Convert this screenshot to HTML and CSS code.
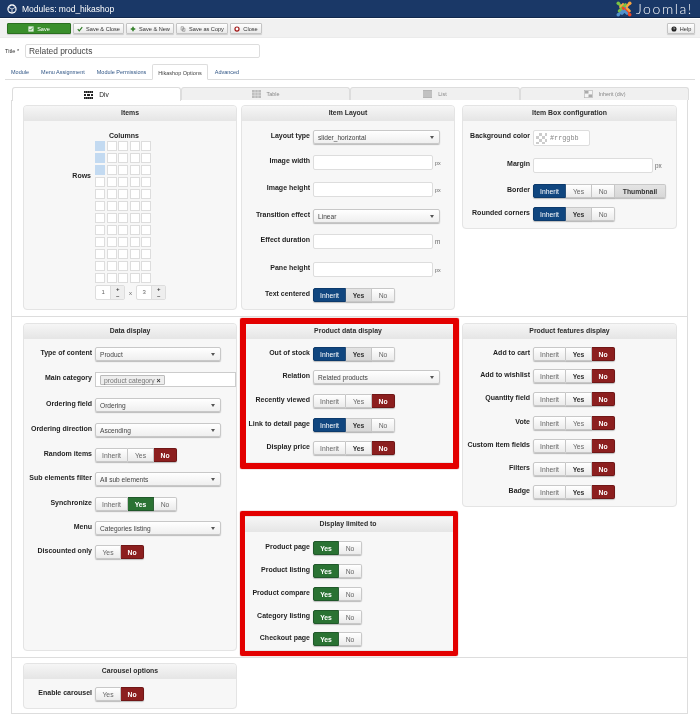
FILE: index.html
```html
<!DOCTYPE html>
<html lang="en">
<head>
<meta charset="utf-8">
<title>Modules: mod_hikashop</title>
<link rel="stylesheet" href="styles.css">
</head>
<body>
<div class="page">
<header class="topbar">
  <svg class="cube" viewBox="0 0 12 12"><circle cx="6" cy="6" r="5.6" fill="#fff"/><path d="M6 1.8 9.8 3.7 6 5.6 2.2 3.7Z" fill="#1a3867"/><path d="M2 4.6 5.5 6.4V10.2L2 8.4ZM10 4.6 6.5 6.4V10.2L10 8.4Z" fill="#1a3867"/></svg>
  <div class="app-title">Modules: mod_hikashop</div>
  <div class="brand">
    <svg class="jlogo" viewBox="0 0 16 16" fill="none" stroke-width="2.6" stroke-linecap="round">
      <path d="M2.5 2.5 8 8 5.5 10.5" stroke="#7ac143"/>
      <path d="M13.5 2.5 8 8" stroke="#f9a541"/>
      <path d="M4.5 6 7 3.5 13.5 10" stroke="#f9a541"/>
      <path d="M2.5 13.5 9 7" stroke="#5091cd"/>
      <path d="M3 10 9.5 3.5" stroke="#7ac143"/>
      <path d="M13.5 13.5 7 7" stroke="#f44321"/>
      <path d="M6 12.5 8.5 10 11 12.5" stroke="#5091cd"/>
      <circle cx="2.2" cy="2.2" r="1.7" fill="#7ac143"/><circle cx="13.8" cy="2.2" r="1.7" fill="#f9a541"/><circle cx="2.2" cy="13.8" r="1.7" fill="#5091cd"/><circle cx="13.8" cy="13.8" r="1.7" fill="#f44321"/>
    </svg>
    <span class="jname">Joomla!</span>
  </div>
</header>
<nav class="toolbar">
  <button class="btn save"><svg class="ic" viewBox="0 0 8 8"><rect x=".5" y=".5" width="7" height="7" fill="#dfeedd"/><path d="M2 4 3.5 5.5 6.5 2" stroke="#2f8a25" fill="none"/></svg>Save</button>
  <button class="btn w51"><svg class="ic" viewBox="0 0 8 8"><path d="M1 4.2 3 6.4 7 1.6" stroke="#2f7d25" stroke-width="1.6" fill="none"/></svg>Save &amp; Close</button>
  <button class="btn w48"><svg class="ic" viewBox="0 0 8 8"><path d="M4 1V7M1 4H7" stroke="#2f7d25" stroke-width="2" fill="none"/></svg>Save &amp; New</button>
  <button class="btn w52"><svg class="ic" viewBox="0 0 8 8"><path d="M1.5 1H4.5V5.5H1.5ZM3.5 3H6.5V7H3.5Z" stroke="#777" stroke-width=".8" fill="#fff"/></svg>Save as Copy</button>
  <button class="btn w32"><svg class="ic" viewBox="0 0 8 8"><circle cx="4" cy="4" r="2.7" stroke="#a01515" stroke-width="1.6" fill="#fff"/></svg>Close</button>
  <button class="btn help"><svg class="ic" viewBox="0 0 8 8"><circle cx="4" cy="4" r="3.4" fill="#222"/><path d="M3 3.2C3 2 5 2 5 3.2 5 4 4 4 4 4.8" stroke="#fff" stroke-width=".8" fill="none"/></svg>Help</button>
</nav>
<div class="title-row">
  <label class="title-label">Title *</label>
  <div class="title-input">Related products</div>
</div>
<ul class="tabs">
  <li>Module</li><li>Menu Assignment</li><li>Module Permissions</li><li class="active">Hikashop Options</li><li>Advanced</li>
</ul>
<ul class="subtabs">
  <li class="on"><svg class="st-ic" viewBox="0 0 9 8"><path d="M0 0H9V2H0ZM0 3H2V5H0ZM3 3H6V5H3ZM7 3H9V5H7ZM0 6H9V8H0Z" fill="#222"/><path d="M1 1H8M1 7H8" stroke="#ddd" stroke-width=".6" stroke-dasharray="1 1"/></svg>Div</li>
  <li><svg class="st-ic" viewBox="0 0 9 8"><rect width="9" height="8" fill="#bbb"/><path d="M3 0V8M6 0V8M0 2.7H9M0 5.3H9" stroke="#e8e8e8" stroke-width=".6"/></svg>Table</li>
  <li><svg class="st-ic" viewBox="0 0 9 8"><rect width="9" height="8" fill="#b5b5b5"/><path d="M0 2H9M0 4H9M0 6H9" stroke="#ddd" stroke-width=".6"/></svg>List</li>
  <li><svg class="st-ic" viewBox="0 0 10 9"><rect x=".3" y=".3" width="9.4" height="8.4" fill="#f4f4f4" stroke="#aaa" stroke-width=".6"/><rect x="1" y="1" width="4" height="3" fill="#aaa"/><rect x="5" y="5" width="4" height="3" fill="#aaa"/></svg>Inherit (div)</li>
</ul>
<main class="panel">
  <section class="row row-1">
    <fieldset class="box">
      <h2>Items</h2>
      <div class="items">
        <div class="cols-label">Columns</div>
        <div class="rows-wrap">
          <div class="rows-label">Rows</div>
          <div class="cells">
            <i class="sel"></i><i></i><i></i><i></i><i></i>
            <i class="sel"></i><i></i><i></i><i></i><i></i>
            <i class="sel"></i><i></i><i></i><i></i><i></i>
            <i></i><i></i><i></i><i></i><i></i>
            <i></i><i></i><i></i><i></i><i></i>
            <i></i><i></i><i></i><i></i><i></i>
            <i></i><i></i><i></i><i></i><i></i>
            <i></i><i></i><i></i><i></i><i></i>
            <i></i><i></i><i></i><i></i><i></i>
            <i></i><i></i><i></i><i></i><i></i>
            <i></i><i></i><i></i><i></i><i></i>
            <i></i><i></i><i></i><i></i><i></i>
          </div>
        </div>
        <div class="steppers">
          <div class="stepper"><span class="num">1</span><span class="pm"><b>+</b><b>–</b></span></div>
          <span class="times">x</span>
          <div class="stepper"><span class="num">3</span><span class="pm"><b>+</b><b>–</b></span></div>
        </div>
      </div>
    </fieldset>
    <fieldset class="box">
      <h2>Item Layout</h2>
      <div class="form f-layout">
        <label>Layout type</label><div class="select s127">slider_horizontal</div>
        <label>Image width</label><div class="ctl"><div class="input"></div><span class="unit tight">px</span></div>
        <label>Image height</label><div class="ctl"><div class="input"></div><span class="unit tight">px</span></div>
        <label>Transition effect</label><div class="select s127">Linear</div>
        <label>Effect duration</label><div class="ctl"><div class="input"></div><span class="unit">m</span></div>
        <label>Pane height</label><div class="ctl"><div class="input"></div><span class="unit tight">px</span></div>
        <label>Text centered</label><div class="tg"><span class="blue">Inherit</span><span class="dim">Yes</span><span>No</span></div>
      </div>
    </fieldset>
    <fieldset class="box col3 short">
      <h2>Item Box configuration</h2>
      <div class="form f-box">
        <label>Background color</label><div class="picker"><span class="swatch"></span><span>#rrggbb</span></div>
        <label>Margin</label><div class="ctl"><div class="input"></div><span class="unit">px</span></div>
        <label>Border</label><div class="tg"><span class="blue">Inherit</span><span>Yes</span><span>No</span><span class="dim thumb">Thumbnail</span></div>
        <label>Rounded corners</label><div class="tg"><span class="blue">Inherit</span><span class="dim">Yes</span><span>No</span></div>
      </div>
    </fieldset>
  </section>
  <section class="row row-2">
    <fieldset class="box">
      <h2>Data display</h2>
      <div class="form f-data">
        <label>Type of content</label><div class="select">Product</div>
        <label>Main category</label><div class="tagbox"><span class="tag">product category <b>×</b></span></div>
        <label>Ordering field</label><div class="select">Ordering</div>
        <label>Ordering direction</label><div class="select">Ascending</div>
        <label>Random items</label><div class="tg"><span>Inherit</span><span>Yes</span><span class="red">No</span></div>
        <label>Sub elements filter</label><div class="select">All sub elements</div>
        <label>Synchronize</label><div class="tg"><span>Inherit</span><span class="green">Yes</span><span>No</span></div>
        <label>Menu</label><div class="select">Categories listing</div>
        <label>Discounted only</label><div class="tg"><span>Yes</span><span class="red">No</span></div>
      </div>
    </fieldset>
    <div class="stack">
      <fieldset class="box hl">
        <h2>Product data display</h2>
        <div class="form f-product">
          <label>Out of stock</label><div class="tg"><span class="blue">Inherit</span><span class="dim">Yes</span><span>No</span></div>
          <label>Relation</label><div class="select s127">Related products</div>
          <label>Recently viewed</label><div class="tg"><span>Inherit</span><span>Yes</span><span class="red">No</span></div>
          <label>Link to detail page</label><div class="tg"><span class="blue">Inherit</span><span class="dim">Yes</span><span>No</span></div>
          <label>Display price</label><div class="tg"><span>Inherit</span><span class="strong">Yes</span><span class="red">No</span></div>
        </div>
      </fieldset>
      <fieldset class="box hl hl-2">
        <h2>Display limited to</h2>
        <div class="form f-limited">
          <label>Product page</label><div class="tg"><span class="green">Yes</span><span>No</span></div>
          <label>Product listing</label><div class="tg"><span class="green">Yes</span><span>No</span></div>
          <label>Product compare</label><div class="tg"><span class="green">Yes</span><span>No</span></div>
          <label>Category listing</label><div class="tg"><span class="green">Yes</span><span>No</span></div>
          <label>Checkout page</label><div class="tg"><span class="green">Yes</span><span>No</span></div>
        </div>
      </fieldset>
    </div>
    <fieldset class="box col3 short">
      <h2>Product features display</h2>
      <div class="form f-features">
        <label>Add to cart</label><div class="tg"><span>Inherit</span><span class="strong">Yes</span><span class="red">No</span></div>
        <label>Add to wishlist</label><div class="tg"><span>Inherit</span><span class="strong">Yes</span><span class="red">No</span></div>
        <label>Quantity field</label><div class="tg"><span>Inherit</span><span class="strong">Yes</span><span class="red">No</span></div>
        <label>Vote</label><div class="tg"><span>Inherit</span><span>Yes</span><span class="red">No</span></div>
        <label>Custom item fields</label><div class="tg"><span>Inherit</span><span>Yes</span><span class="red">No</span></div>
        <label>Filters</label><div class="tg"><span>Inherit</span><span class="strong">Yes</span><span class="red">No</span></div>
        <label>Badge</label><div class="tg"><span>Inherit</span><span class="strong">Yes</span><span class="red">No</span></div>
      </div>
    </fieldset>
  </section>
  <section class="row row-3">
    <fieldset class="box">
      <h2>Carousel options</h2>
      <div class="form f-carousel">
        <label>Enable carousel</label><div class="tg"><span>Yes</span><span class="red">No</span></div>
      </div>
    </fieldset>
  </section>
</main>
</div>
</body>
</html>
```
FILE: styles.css
```css
* { box-sizing: border-box; }
html, body { margin: 0; padding: 0; background: #fff; }
body { width: 700px; height: 726px; overflow: hidden; font-family: "Liberation Sans", Arial, sans-serif; color: #333; }
.page { filter: blur(.35px); will-change: transform; }

.topbar { height: 18px; background: #1a3867; border-bottom: 1px solid #12294d; display: flex; align-items: center; padding-left: 7px; color: #fff; }
.cube { width: 10px; height: 10px; margin-right: 5px; flex: none; }
.app-title { font-size: 8.5px; line-height: 16px; white-space: nowrap; }
.brand { margin-left: auto; display: flex; align-items: center; padding-right: 7px; }
.jlogo { width: 16px; height: 16px; margin-right: 4px; }
.jname { font-family: Lato, sans-serif; font-weight: 300; font-size: 14px; letter-spacing: 1.6px; color: #fff; line-height: 16px; }

.toolbar { margin-top: 1px; height: 19px; background: #f1f1f1; border-bottom: 1px solid #ebebeb; display: flex; align-items: flex-start; padding: 4px 5px 0 7px; gap: 2px; }
.btn { height: 11px; padding: 0; display: flex; align-items: center; justify-content: center; gap: 3px; font: 5.6px "Liberation Sans", sans-serif; color: #333; background: linear-gradient(#fff, #e9e9e9); border: 1px solid #c4c4c4; border-radius: 1px; box-shadow: 0 1px 1px #ccc; }
.ic { width: 6px; height: 6px; flex: none; }
.save { width: 64px; color: #fff; background: #3a8f2c; border-color: #2b6f20; }
.w51 { width: 51px; } .w48 { width: 48px; } .w52 { width: 52px; } .w32 { width: 32px; }
.help { width: 28px; margin-left: auto; }

.title-row { display: flex; align-items: center; padding: 6px 0 0 5px; }
.title-label { width: 20px; font-size: 5.6px; color: #333; }
.title-input { width: 235px; height: 14px; padding-left: 3px; border: 1px solid #ddd; border-radius: 2px; font-size: 8.4px; line-height: 12px; color: #444; }

.tabs { list-style: none; margin: 6px 5px 0; padding: 0; height: 16px; display: flex; border-bottom: 1px solid #ddd; font-size: 5.5px; color: #2f5585; }
.tabs li { padding: 4px 6px 0; line-height: 8px; white-space: nowrap; }
.tabs .active { margin: 0 1px -1px 0; padding: 4px 5px 0; height: 16px; background: #fff; border: 1px solid #ddd; border-bottom-color: #fff; border-radius: 2px 2px 0 0; color: #444; }

.subtabs { list-style: none; margin: 7px 0 0 12px; padding: 0; width: 677px; height: 13px; display: grid; grid-template-columns: 169px 169px 170px 169px; font-size: 5.4px; color: #888; }
.subtabs li { display: flex; align-items: center; justify-content: center; gap: 6px; background: #f0f0f0; border: 1px solid #ddd; border-bottom: 0; border-radius: 3px 3px 0 0; }
.subtabs .on { background: #fff; color: #222; font-size: 6.6px; font-weight: 400; margin-bottom: -1px; position: relative; }
.st-ic { width: 9px; height: 8px; }

.panel { width: 677px; margin-left: 11px; border-left: 1px solid #ddd; border-right: 1px solid #ddd; border-bottom: 1px solid #ddd; height: 614px; }
.row { display: grid; grid-template-columns: 214px 214px 218px; column-gap: 4px; padding-left: 11px; border-bottom: 1px solid #ddd; }
.row-1 { padding-top: 5px; padding-bottom: 6px; }
.row-2 { padding-top: 6px; padding-bottom: 6px; }
.row-3 { padding-top: 5px; border-bottom: 0; }

.box { position: relative; margin: 0; padding: 0 0 7px; min-width: 0; background: #f7f7f7; border: 1px solid #e4e4e4; border-radius: 4px; }
.box h2 { margin: 0; height: 15px; font-size: 6.9px; line-height: 14px; font-weight: 700; text-align: center; color: #2c2c2c; background: linear-gradient(#f6f6f6, #e6e6e6); border-bottom: 1px solid #e6e6e6; border-radius: 3px 3px 0 0; }
.col3 { margin-left: 3px; }
.short { align-self: start; }
.stack { display: flex; flex-direction: column; gap: 53px; }
.hl::after { content: ""; position: absolute; left: -2px; top: -6px; right: -5px; bottom: -7px; border: 6px solid #e30000; border-radius: 2px; box-shadow: 0 0 1px #900; }
.hl-2 { padding-bottom: 4px; }
.hl-2::after { left: -2px; top: -6px; right: -4px; bottom: -6px; border-width: 5.5px; }

.form { display: grid; grid-template-columns: 68px 1fr; column-gap: 3px; align-items: start; }
.col3 .form { grid-template-columns: 67px 1fr; }
.form label { padding-top: 2px; font-size: 7px; font-weight: 700; line-height: 8px; text-align: right; white-space: nowrap; color: #1f1f1f; direction: rtl; unicode-bidi: plaintext; }
.f-layout { padding-top: 9px; grid-template-rows: 25px 27px 27px 25px 28px 26px 14px; }
.f-box { padding-top: 9px; grid-template-rows: 28px 26px 23px 14px; }
.f-data { padding-top: 8px; grid-template-rows: 25px 26px 25px 25px 24px 25px 24px 24px 14px; }
.f-product { padding-top: 8px; grid-template-rows: 23px 24px 24px 23px 14px; }
.f-features { padding-top: 8px; grid-template-rows: 22px 23px 24px 23px 23px 23px 14px; }
.f-limited { padding-top: 9px; grid-template-rows: 23px 23px 23px 22px 14px; }
.f-carousel { padding-top: 8px; }

.select { position: relative; width: 126px; height: 14px; padding-left: 4px; font-size: 6.6px; line-height: 13px; color: #444; background: linear-gradient(#fff, #efefef); border: 1px solid #c8c8c8; border-radius: 2px; box-shadow: 0 1px 1px #bbb; }
.s127 { width: 127px; }
.select::after { content: ""; position: absolute; right: 5px; top: 5px; border: 2px solid transparent; border-top: 3px solid #555; border-bottom: 0; }
.ctl { display: flex; align-items: center; }
.input { width: 120px; height: 15px; background: #fff; border: 1px solid #ddd; border-radius: 2px; }
.unit { margin-left: 2px; font-size: 6.4px; color: #666; }
.tight { font-size: 5.4px; }
.tagbox { width: 141px; height: 15px; padding: 2px 0 0 4px; display: flex; background: #fff; border: 1px solid #ccc; }
.tag { height: 10px; padding: 0 3px; font-size: 6.8px; line-height: 9px; color: #777; background: #eee; border: 1px solid #bbb; border-radius: 1px; white-space: nowrap; }
.tag b { color: #333; font-size: 7px; }
.picker { width: 57px; height: 16px; display: flex; align-items: center; gap: 3px; padding-left: 2px; border: 1px solid #ddd; border-radius: 2px; font: 6.8px "Liberation Mono", monospace; color: #888; background: #fff; }
.swatch { width: 11px; height: 11px; background: repeating-conic-gradient(#ccc 0 25%, #fff 0 50%) 0 0 / 6px 6px; }

.tg { display: inline-flex; height: 14px; }
.tg span { width: 23px; display: flex; align-items: center; justify-content: center; font-size: 6.8px; color: #666; background: linear-gradient(#fff, #ebebeb); border: 1px solid #c8c8c8; border-left-width: 0; box-shadow: 0 1px 1px #bbb; }
.tg span:first-child { width: 33px; border-left-width: 1px; border-radius: 2px 0 0 2px; }
.tg span:nth-child(2):not(:last-child) { width: 26px; }
.tg span:first-child:nth-last-child(2) { width: 26px; }
.tg span:last-child { border-radius: 0 2px 2px 0; }
.tg .blue { color: #fff; background: #10467f; border-color: #0c3a6c; }
.tg .green { color: #fff; font-weight: 700; background: #2a7233; border-color: #20582a; }
.tg .red { color: #fff; font-weight: 700; background: #8c1f1f; border-color: #701717; }
.tg .dim { font-weight: 700; color: #333; background: linear-gradient(#e4e4e4, #d8d8d8); }
.tg .strong { font-weight: 700; color: #333; }
.tg .thumb { width: 51px; }

.items { position: relative; height: 181px; padding-top: 11px; }
.cols-label { width: 200px; text-align: center; font-size: 7px; font-weight: 700; line-height: 8px; color: #1f1f1f; }
.rows-wrap { display: flex; margin-top: 1px; }
.rows-label { width: 67px; padding-top: 31px; text-align: right; font-size: 7px; font-weight: 700; color: #1f1f1f; }
.cells { margin-left: 4px; display: grid; grid-template-columns: repeat(5, 10px); grid-auto-rows: 10px; column-gap: 1.5px; row-gap: 2px; }
.cells i { display: block; background: #fff; border: 1px solid #ddd; }
.cells .sel { background: #c3daf1; border-color: #c3daf1; }
.steppers { display: flex; align-items: center; margin: 2px 0 0 71px; color: #666; font-size: 6px; }
.stepper { display: flex; width: 30px; height: 15px; border: 1px solid #ddd; border-radius: 2px; background: #fff; }
.num { width: 15px; text-align: center; line-height: 13px; }
.pm { width: 14px; display: flex; flex-direction: column; background: #eee; border-left: 1px solid #ddd; }
.pm b { text-align: center; font-size: 6px; line-height: 6.5px; color: #333; }
.times { width: 11px; text-align: center; }
```
